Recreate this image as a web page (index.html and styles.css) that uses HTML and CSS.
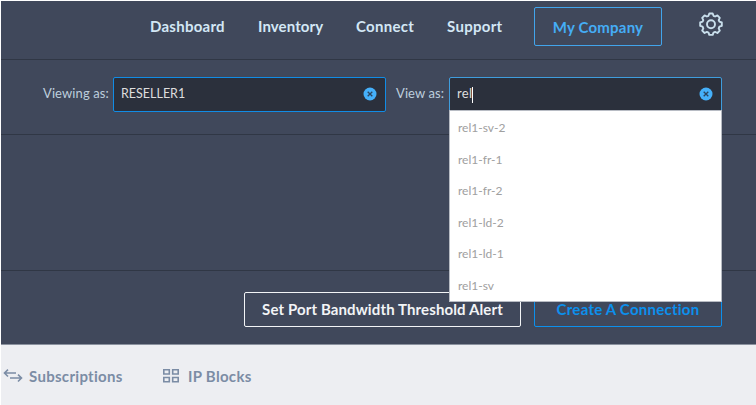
FILE: index.html
```html
<!DOCTYPE html>
<html lang="en">
<head>
  <meta charset="UTF-8">
  <title>Inventory</title>
  <link rel="stylesheet" href="styles.css">
</head>
<body>
  <header class="topbar">
    <nav class="nav">
      <a class="dashboard">Dashboard</a>
      <a class="inventory">Inventory</a>
      <a class="connect">Connect</a>
      <a class="support">Support</a>
    </nav>
    <a class="company"><span>My Company</span></a>
    <svg class="gear" viewBox="0 0 24 24">
      <path d="M10.300 1.500h3.400l.8 2.300 1.600.7 2.300-1.100 2.400 2.400-1.100 2.300.7 1.600 2.400.8v3.400l-2.400.8-.7 1.600 1.100 2.300-2.400 2.400-2.300-1.100-1.600.7-.8 2.300h-3.400l-.8-2.300-1.600-.7-2.300 1.100-2.400-2.400 1.100-2.300-.7-1.600-2.400-.8v-3.400l2.400-.8.7-1.600-1.100-2.300 2.400-2.400 2.300 1.100 1.600-.7z"/>
      <circle cx="12" cy="12.200" r="4"/>
    </svg>
  </header>

  <section class="filters">
    <label class="viewing">Viewing as:</label>
    <div class="field">
      <span class="value reseller">RESELLER1</span>
      <svg class="clear" viewBox="0 0 14 14"><circle cx="7" cy="7" r="6.500"/><path d="M4.700 4.700l4.600 4.600M9.300 4.700L4.700 9.300"/></svg>
    </div>
    <label class="view">View as:</label>
    <div class="field active">
      <span class="value">rel</span><i class="caret"></i>
      <svg class="clear" viewBox="0 0 14 14"><circle cx="7" cy="7" r="6.500"/><path d="M4.700 4.700l4.600 4.600M9.300 4.700L4.700 9.300"/></svg>
      <ul class="options">
        <li>rel1-sv-2</li>
        <li>rel1-fr-1</li>
        <li>rel1-fr-2</li>
        <li>rel1-ld-2</li>
        <li>rel1-ld-1</li>
        <li>rel1-sv</li>
      </ul>
    </div>
  </section>

  <section class="banner"></section>

  <section class="actions">
    <a class="btn threshold"><span>Set Port Bandwidth Threshold Alert</span></a>
    <a class="btn create"><span>Create A Connection</span></a>
  </section>

  <footer class="tabs">
    <a class="tab subscriptions">
      <svg class="arrows" viewBox="0 0 20 14"><path d="M13 4H1.500M5 .7L1.500 4 5 7.500M7 9h11.500M15 5.700L18.500 9 15 12.500"/></svg>
      <span>Subscriptions</span>
    </a>
    <a class="tab blocks">
      <svg class="grid" viewBox="0 0 16 14"><path d="M.8.8h5.500v4.200H.8zM9.700.8h5.500v4.200H9.700zM.8 8.500h5.500v4.200H.8zM9.700 8.500h5.500v4.200H9.700z"/></svg>
      <span>IP Blocks</span>
    </a>
  </footer>
</body>
</html>
```

FILE: styles.css
```css
* {
  box-sizing: border-box;
}
body {
  margin: 0;
  padding: 1px 0 0 1px;
  width: 756px;
  height: 405px;
  overflow: hidden;
  background: #fff;
  font-family: Lato, "Open Sans", sans-serif;
  font-size: 13px;
  color: #d3e7f5;
  white-space: nowrap;
}
svg {
  fill: none;
  flex: none;
}
.topbar, .filters, .banner, .actions {
  background: #40485b;
}
.topbar, .filters, .banner {
  border-bottom: 1px solid #303745;
}
.topbar {
  display: flex;
  height: 59px;
  padding: 6px 0 0 149px;
}
.nav {
  display: flex;
  gap: 33px;
  width: 384px;
  height: 38px;
  align-items: center;
  font-size: 15px;
  font-weight: bold;
}
.dashboard { width: 75px; letter-spacing: 0.25px; }
.inventory { width: 65px; letter-spacing: 0.1px; }
.connect { width: 58px; letter-spacing: 0.3px; }
.support { width: 55px; letter-spacing: 0.3px; }
.company {
  width: 128px;
  height: 39px;
  border: 1px solid #42a5ec;
  border-radius: 2px;
  color: #45adf5;
  font-size: 15px;
  font-weight: bold;
  line-height: 38px;
  letter-spacing: 0.2px;
  text-align: center;
}
.gear {
  width: 24px;
  height: 24px;
  margin: 5px 0 0 37px;
  stroke: #c9dfec;
  stroke-width: 1.9;
  stroke-linejoin: round;
}
.filters {
  display: flex;
  height: 75px;
  padding: 17px 0 0 42px;
}
label {
  height: 35px;
  line-height: 33px;
  letter-spacing: 0.1px;
  color: #bdcedd;
}
.viewing { width: 70px; }
.view { width: 53px; margin-left: 10px; }
.field {
  position: relative;
  display: flex;
  align-items: center;
  width: 273px;
  height: 35px;
  padding: 0 8px 0 7px;
  border: 1px solid #118ce5;
  border-radius: 2px;
  background: #2b303c;
  color: #dedede;
}
.active {
  border-color: #3f9ddd;
}
.value {
  line-height: 31px;
  margin-bottom: 2px;
  letter-spacing: 0.3px;
}
.reseller {
  font-size: 12.5px;
  letter-spacing: 0;
}
.caret {
  width: 1px;
  height: 16px;
  background: #fff;
}
.clear {
  width: 14px;
  height: 14px;
  margin: 0 0 1px auto;
}
.clear circle {
  fill: #45b0fa;
}
.clear path {
  stroke: #2b4560;
  stroke-width: 1.3;
}
.options {
  position: absolute;
  top: 32px;
  left: -1px;
  z-index: 1;
  width: 273px;
  height: 192px;
  margin: 0;
  padding: 1px 0 0 8px;
  border: 1px solid #b8bcc4;
  background: #fff;
  list-style: none;
  font-size: 12px;
  color: #a0a0a0;
}
.options li {
  height: 31.5px;
  line-height: 31px;
}
.banner {
  height: 136px;
}
.actions {
  display: flex;
  gap: 13px;
  height: 73px;
  padding: 21px 0 0 243px;
}
.btn {
  height: 35px;
  border: 1px solid #f2f4f6;
  border-radius: 2px;
  color: #f2f4f6;
  font-size: 15px;
  font-weight: bold;
  line-height: 33px;
  letter-spacing: 0.12px;
  text-align: center;
}
.threshold {
  width: 277px;
}
.create {
  width: 188px;
  border-color: #0c90ed;
  color: #0c90ed;
  letter-spacing: 0.25px;
}
.tabs {
  display: flex;
  height: 61px;
  padding-left: 2px;
  border-top: 1px solid #8b929f;
  background: #edeef2;
  color: #7b8ca5;
  font-size: 15px;
  font-weight: bold;
  letter-spacing: 0.3px;
}
.tab {
  display: flex;
  align-items: center;
  height: 62px;
}
.tab svg {
  stroke: #7b8ca5;
  stroke-width: 1.6;
}
.subscriptions {
  width: 160px;
}
.arrows {
  width: 20px;
  height: 14px;
  margin-right: 6px;
}
.grid {
  width: 16px;
  height: 14px;
  margin-right: 9px;
}
```
